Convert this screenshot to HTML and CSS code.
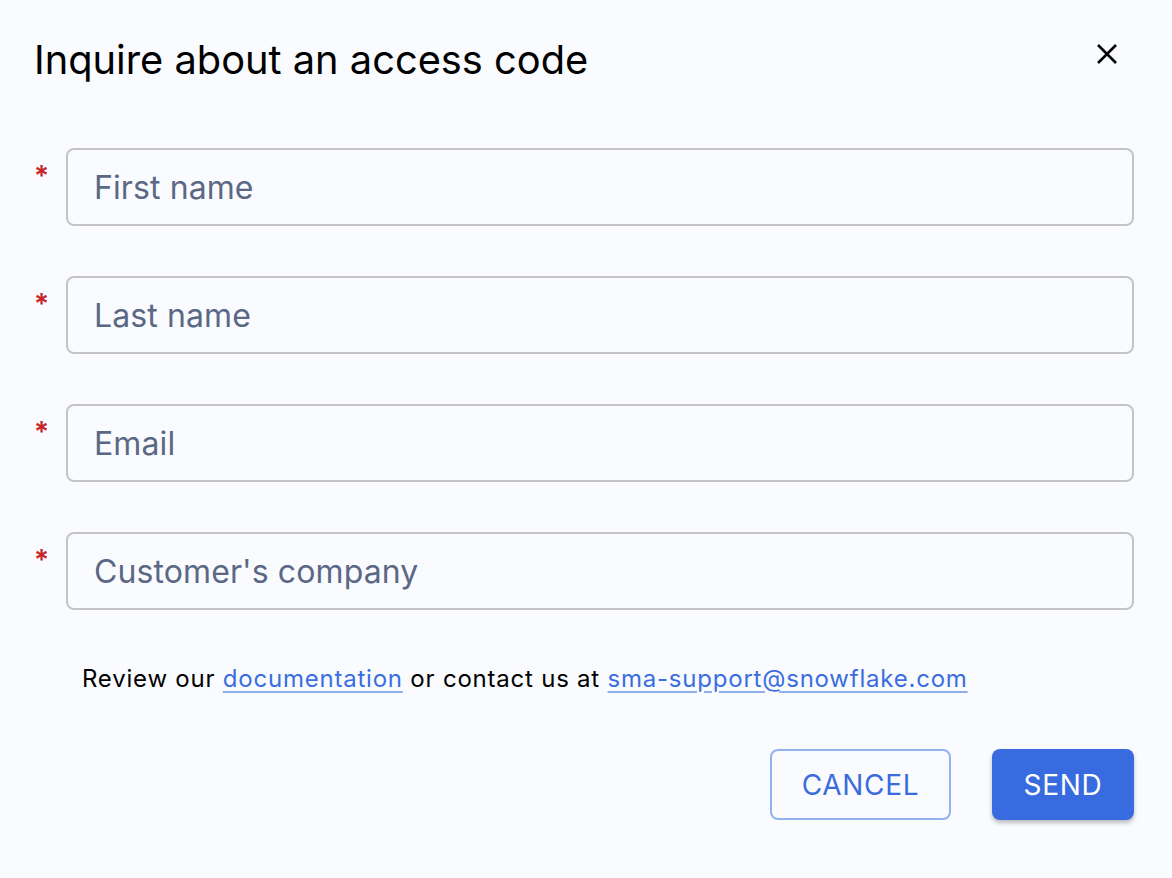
FILE: index.html
```html
<!DOCTYPE html>
<html>
<head>
<meta charset="utf-8">
<link rel="stylesheet" href="styles.css">
</head>
<body>
<div class="dialog">
  <div class="header">
    <h1 class="title">Inquire about an access code</h1>
    <button class="close" aria-label="close">
      <svg width="22" height="22" viewBox="0 0 22 22"><path d="M2 2 L20 20 M20 2 L2 20" stroke="#000" stroke-width="2.6" fill="none"/></svg>
    </button>
  </div>
  <div class="fields">
    <div class="row"><span class="req">*</span><div class="input">First name</div></div>
    <div class="row"><span class="req">*</span><div class="input">Last name</div></div>
    <div class="row"><span class="req">*</span><div class="input">Email</div></div>
    <div class="row"><span class="req">*</span><div class="input">Customer's company</div></div>
  </div>
  <p class="note">Review our <a href="#">documentation</a> or contact us at <a href="#">sma-support@snowflake.com</a></p>
  <div class="actions">
    <button class="btn cancel">CANCEL</button>
    <button class="btn send">SEND</button>
  </div>
</div>
</body>
</html>
```
FILE: styles.css
```css
html, body {
  margin: 0;
  padding: 0;
  background: #f9fbfe;
  font-family: Inter, "Noto Sans", sans-serif;
}
.dialog {
  width: 1172px;
  height: 878px;
  box-sizing: border-box;
  padding: 0 38px 0 34px;
}
.header {
  display: flex;
  align-items: center;
  justify-content: space-between;
  height: 118px;
}
.title {
  margin: 0;
  font-size: 39.8px;
  font-weight: 400;
  color: #000;
  letter-spacing: 0;
}
.close {
  background: none;
  border: 0;
  padding: 0;
  width: 22px;
  height: 22px;
  margin-right: 16px;
  margin-top: -10px;
  display: flex;
}
.fields {
  display: flex;
  flex-direction: column;
  gap: 50px;
  margin-top: 30px;
}
.row {
  display: flex;
  align-items: flex-start;
}
.req {
  width: 32px;
  color: #c8262b;
  font-size: 28px;
  line-height: 28px;
  margin-top: 14px;
  font-weight: 600;
}
.input {
  flex: 1;
  height: 78px;
  box-sizing: border-box;
  border: 2px solid #c4c4c6;
  border-radius: 8px;
  padding: 0 26px;
  display: flex;
  align-items: center;
  font-size: 32px;
  letter-spacing: 0.1px;
  color: #5b6885;
}
.note {
  margin: 54px 0 0 48px;
  font-size: 24px;
  color: #000;
  letter-spacing: 0.78px;
}
.note a {
  color: #3a6ee0;
  text-decoration: underline;
  text-decoration-color: #8eaeec;
  text-underline-offset: 4px;
}
.actions {
  display: flex;
  justify-content: flex-end;
  gap: 41px;
  margin-top: 56px;
}
.btn {
  height: 71px;
  font-family: Inter, "Noto Sans", sans-serif;
  font-size: 28px;
  letter-spacing: 0.7px;
  border-radius: 8px;
  box-sizing: border-box;
  padding: 0;
}
.cancel {
  width: 181px;
  background: transparent;
  border: 2px solid #93b2ee;
  color: #3a6bdd;
}
.send {
  width: 142px;
  background: #386ae0;
  border: 0;
  color: #fff;
  box-shadow: 0 3px 4px rgba(0,0,0,0.25);
}
```
